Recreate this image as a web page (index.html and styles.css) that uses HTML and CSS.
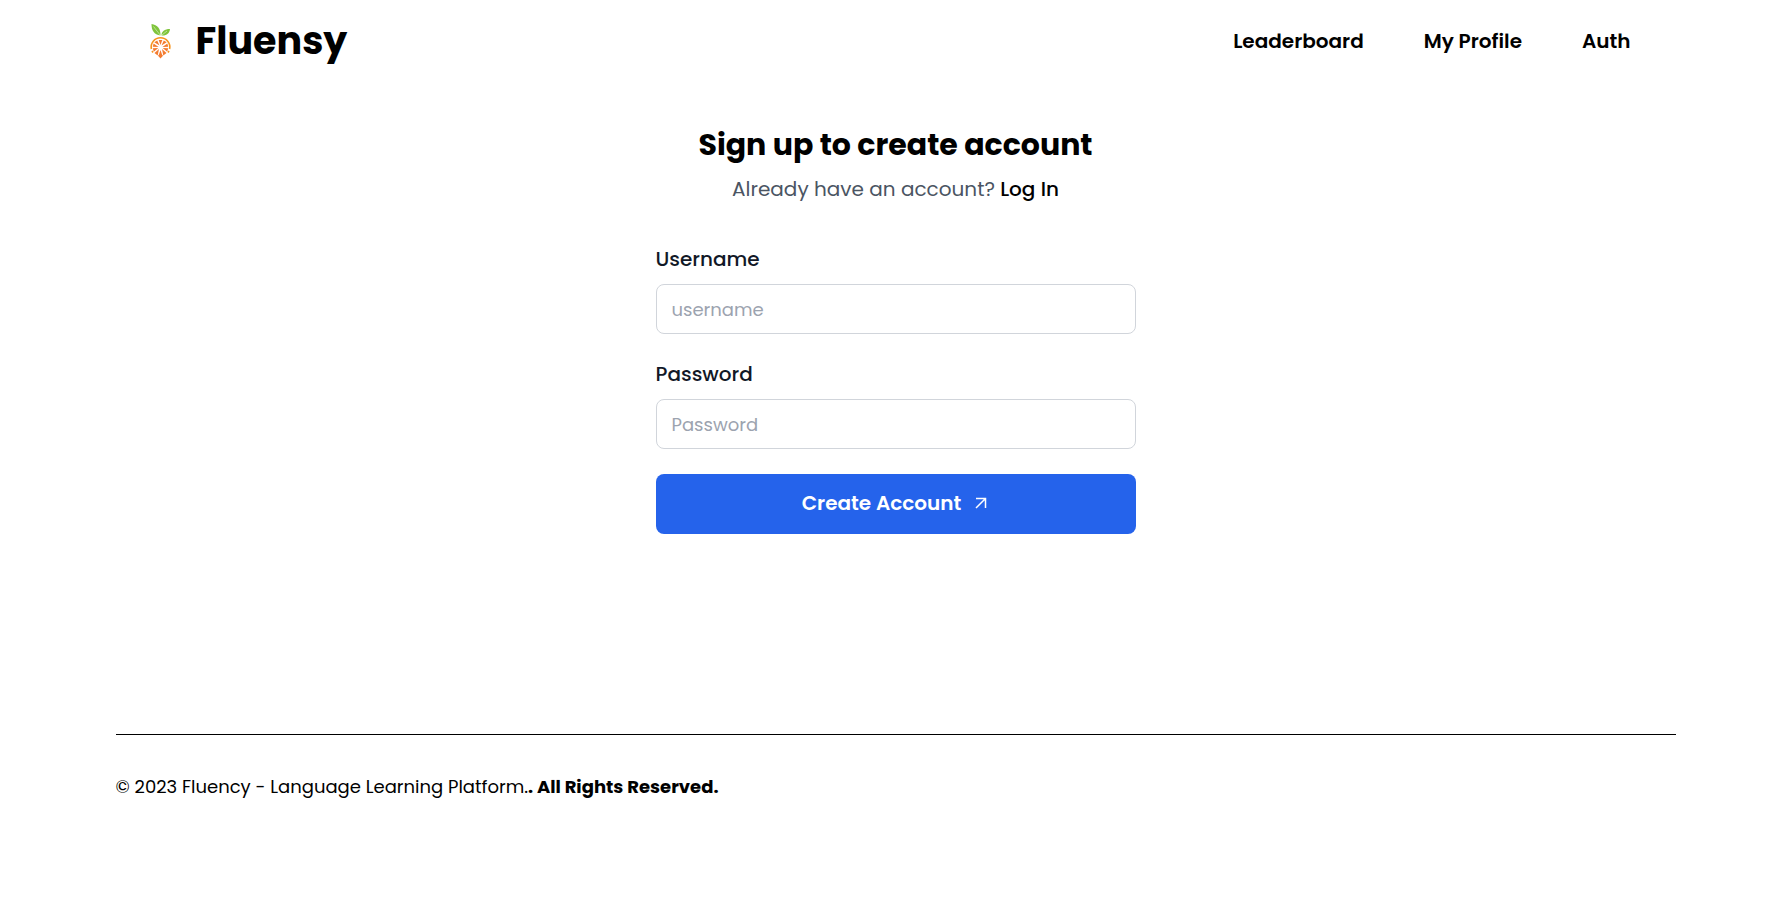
FILE: index.html
```html
<!DOCTYPE html>
<html lang="en">
<head>
  <meta charset="utf-8">
  <meta name="viewport" content="width=device-width, initial-scale=1">
  <title>Fluensy</title>
  <link rel="stylesheet" href="styles.css">
</head>
<body>
  <header class="header">
    <a class="brand" href="#">
      <svg class="brand-icon" viewBox="0 0 50 50" aria-hidden="true">
        <path fill="#7fc43b" d="M15.500 8c6 1 9.300 4.500 9 11.500C18 18.500 15.500 14.500 15.500 8zM25.500 19.500c0-4 3-6.500 8.500-6.500-.5 4.500-3.500 7-8.500 6.500z"/>
        <path fill="none" stroke="#e4f3d4" stroke-width=".6" d="M17.500 10.500l7 9M26 19l5-4"/>
        <path fill="none" stroke="#f7941e" stroke-width="1.600" d="M15.400 33a9.300 9.300 0 1 1 18.200 0M16 35l1 1.500M33 35l-1 1.500"/>
        <g fill="#f47b30">
          <path d="M22.700 24h3.600L24.500 29z"/>
          <path d="M18.300 26.200l2.900-1.800 2.300 5zM30.700 26.200l-2.900-1.800-2.300 5z"/>
          <path d="M16.800 30.800l.8-3.300 5 3.500zM32.200 30.800l-.8-3.300-5 3.500z"/>
          <path d="M16.800 32.200l5.500-.2-4.500 3.800zM32.200 32.200l-5.500-.2 4.500 3.800z"/>
          <path d="M18.500 37l4.500-4-1.300 6.500zM30.500 37l-4.500-4 1.300 6.500z"/>
          <path d="M24.500 34l1.500 4.500 1 1.200-2.500 2.800-2.500-2.800 1-1.200z"/>
        </g>
      </svg>
      <span class="brand-name">Fluensy</span>
    </a>
    <nav class="nav">
      <a href="#">Leaderboard</a>
      <a href="#">My Profile</a>
      <a href="#">Auth</a>
    </nav>
  </header>

  <main class="signup">
    <h1 class="title">Sign up to create account</h1>
    <p class="subtitle">Already have an account? <a href="#">Log In</a></p>
    <form class="form">
      <div class="field">
        <label for="username">Username</label>
        <input id="username" type="text" placeholder="username">
      </div>
      <div class="field">
        <label for="password">Password</label>
        <input id="password" type="password" placeholder="Password">
      </div>
      <button class="submit" type="button">
        Create Account
        <svg class="arrow" viewBox="0 0 16 16" aria-hidden="true"><path d="M3 13L12.500 3.500M3 3.500h9.500v9.500"/></svg>
      </button>
    </form>
  </main>

  <footer class="footer">
    <p>© 2023 Fluency - Language Learning Platform.<strong>. All Rights Reserved.</strong></p>
  </footer>
</body>
</html>
```

FILE: styles.css
```css
* {
  box-sizing: border-box;
  margin: 0;
}

body {
  background: #fff;
  color: #000;
  font-family: Poppins, Inter, sans-serif;
  font-size: 20px;
  line-height: 30px;
}

a {
  color: inherit;
  text-decoration: none;
}

.header {
  display: flex;
  align-items: center;
  justify-content: space-between;
  max-width: 1560px;
  margin: 0 auto;
  padding: 12px 45px 12px 20px;
}

.brand {
  display: flex;
  align-items: center;
  gap: 10px;
}

.brand-icon {
  width: 50px;
  height: 50px;
}

.brand-name {
  font-size: 38px;
  font-weight: 700;
  line-height: 58px;
}

.nav {
  display: flex;
  gap: 60px;
  font-weight: 600;
}

.signup {
  max-width: 480px;
  margin: 0 auto;
  padding-top: 40px;
}

.title {
  font-size: 30px;
  font-weight: 700;
  line-height: 46px;
  text-align: center;
}

.subtitle {
  margin-top: 6px;
  color: #4b5563;
  text-align: center;
}

.subtitle a {
  color: #000;
  font-weight: 500;
}

.form {
  display: grid;
  gap: 25px;
  margin-top: 40px;
}

.field {
  display: grid;
  gap: 10px;
}

.field label {
  color: #111827;
  font-weight: 500;
}

.field input {
  width: 100%;
  height: 50px;
  padding: 0 15px;
  border: 1px solid #d1d5db;
  border-radius: 8px;
  background: transparent;
  font: inherit;
  font-size: 18px;
}

.field input::placeholder {
  color: #9ca3af;
}

.submit {
  display: flex;
  align-items: center;
  justify-content: center;
  gap: 12px;
  height: 60px;
  padding: 0 8px 2px;
  border: 0;
  border-radius: 8px;
  background: #2563eb;
  color: #fff;
  font: inherit;
  font-weight: 600;
}

.arrow {
  width: 16px;
  height: 16px;
  fill: none;
  stroke: currentColor;
  stroke-width: 1.5;
}

.footer {
  max-width: 1560px;
  margin: 200px auto 0;
  padding: 37px 0;
  border-top: 1px solid #000;
  font-size: 18px;
}
```
